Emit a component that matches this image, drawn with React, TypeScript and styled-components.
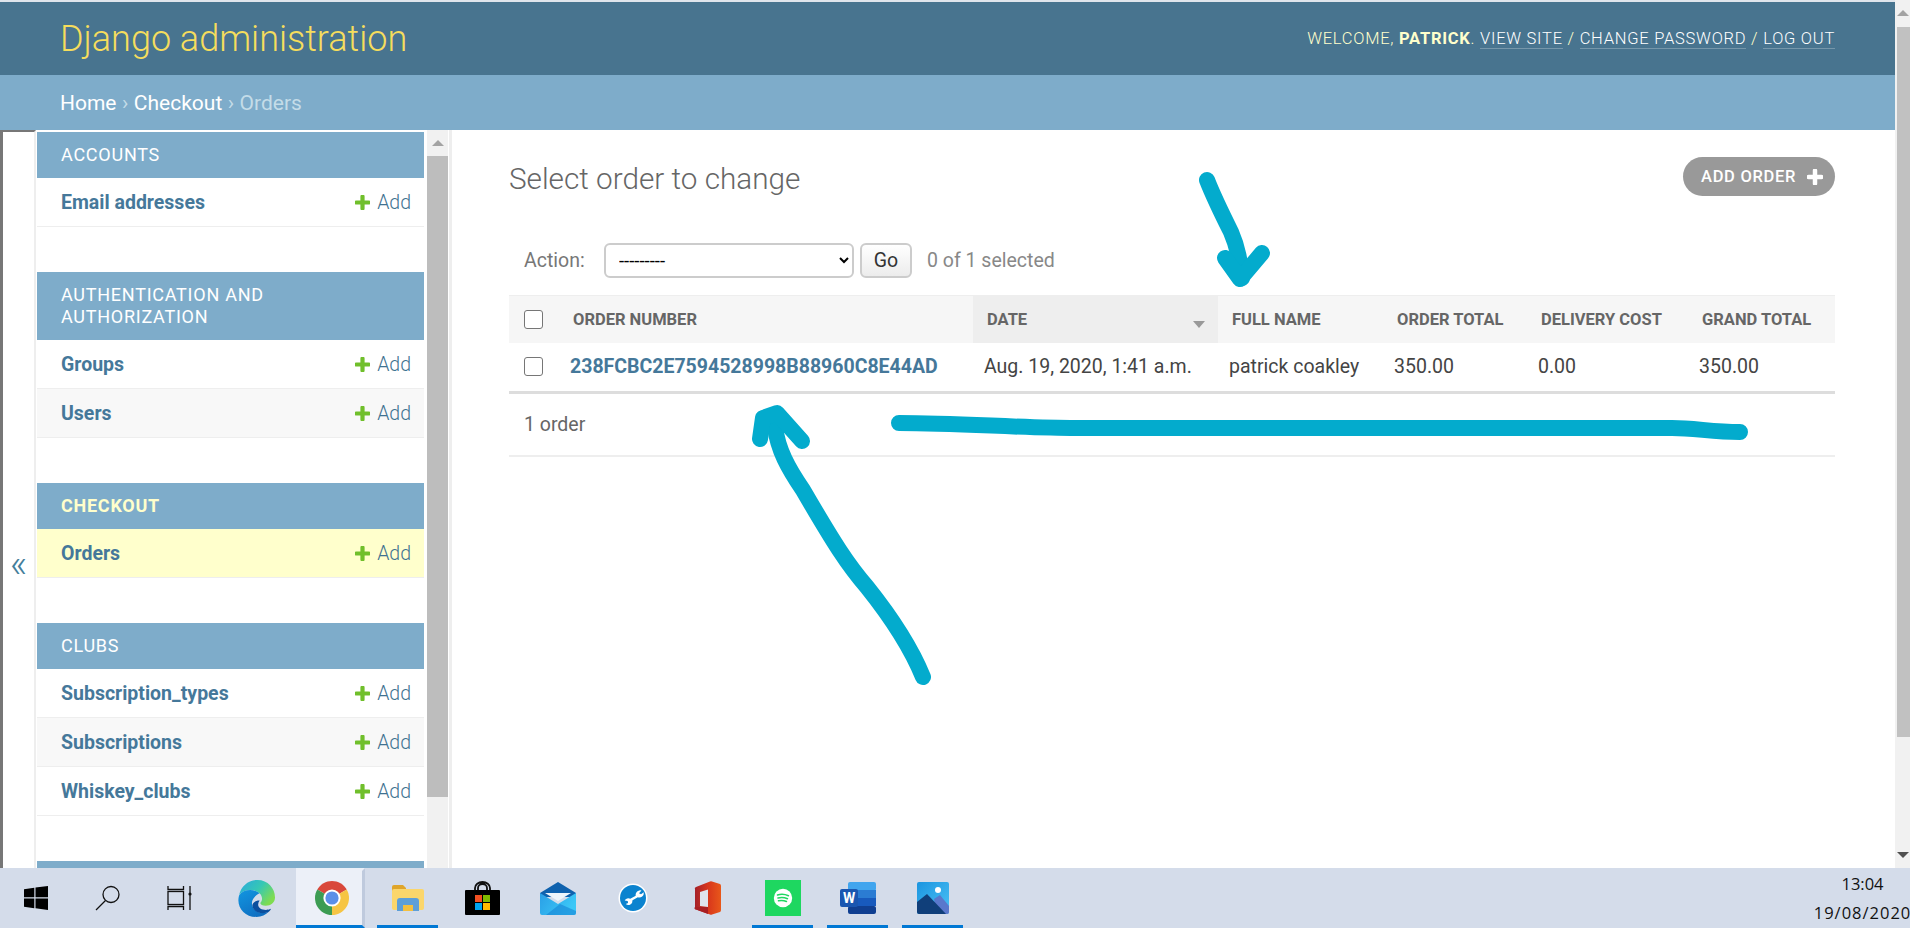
import styled, { createGlobalStyle } from "styled-components";

const GlobalStyle = createGlobalStyle`
  html, body {
    margin: 0;
    padding: 0;
    width: 100%;
    height: 100%;
    overflow: hidden;
    background: #fff;
    font-family: Roboto, "Liberation Sans", sans-serif;
  }
  * { box-sizing: border-box; }
`;

const modules = [
  { name: "ACCOUNTS", rows: ["Email addresses"] },
  { name: "AUTHENTICATION AND\nAUTHORIZATION", rows: ["Groups", "Users"] },
  { name: "CHECKOUT", rows: ["Orders"], current: true },
  { name: "CLUBS", rows: ["Subscription_types", "Subscriptions", "Whiskey_clubs"] },
  { name: "\u00a0", rows: [] },
];

const columns = [
  { label: "ORDER NUMBER", width: 414 },
  { label: "DATE", width: 245, sorted: true },
  { label: "FULL NAME", width: 165 },
  { label: "ORDER TOTAL", width: 144 },
  { label: "DELIVERY COST", width: 161 },
  { label: "GRAND TOTAL", width: 147 },
];

const PlusIcon = ({ size, color }: { size: number; color: string }) => (
  <svg width={size} height={size} viewBox="0 0 15 15">
    <path d="M7.5 1.5v12M1.5 7.5h12" stroke={color} strokeWidth="4.2" strokeLinecap="round" />
  </svg>
);

const WindowsIcon = () => (
  <svg width="24" height="24" viewBox="0 0 24 24">
    <path d="M0 3.3 10.3 1.8v9.5H0zM11.5 1.6 24 0v11.3H11.5zM0 12.6h10.3v9.6L0 20.7zM11.5 12.6H24V24l-12.5-1.7z" fill="#000" />
  </svg>
);

const SearchIcon = () => (
  <svg width="26" height="26" viewBox="0 0 26 26" fill="none" stroke="#111" strokeWidth="1.3">
    <circle cx="16" cy="9.5" r="8" />
    <path d="M10.5 15.5 1 25" />
  </svg>
);

const TaskViewIcon = () => (
  <svg width="26" height="24" viewBox="0 0 26 24" fill="none" stroke="#111" strokeWidth="1.3">
    <path d="M1 0v3.5h15.5V0M1 24v-3.5h15.5V24M23 0v24" />
    <rect x="1" y="5.5" width="15.5" height="13" />
    <circle cx="23" cy="8" r="1.6" fill="#111" stroke="none" />
  </svg>
);

const EdgeIcon = () => (
  <svg width="37" height="37" viewBox="0 0 36 36">
    <defs>
      <linearGradient id="edgeTop" x1="0" y1="0" x2="1" y2="0.6">
        <stop offset="0" stopColor="#2aa8e0" />
        <stop offset="0.55" stopColor="#36c8b4" />
        <stop offset="1" stopColor="#7fdc50" />
      </linearGradient>
      <linearGradient id="edgeLeft" x1="0" y1="0" x2="0.6" y2="1">
        <stop offset="0" stopColor="#1296e0" />
        <stop offset="1" stopColor="#0f6fc2" />
      </linearGradient>
    </defs>
    <path d="M1 15C3 6 10 0 19 0c10 0 17 8 17 17 0 5-4 8-9 8-4 0-6-2-5-3 2-2 2-6-1-9C16 8 5 9 1 15z" fill="url(#edgeTop)" />
    <path d="M1 15c-3 11 5 21 17 21 5 0 9-2 12-5-6 2-14 1-16-6-2-6 3-10 7-12C15 8 5 9 1 15z" fill="url(#edgeLeft)" />
    <path d="M14 25c1 7 10 9 16 6 1-1 2-2 2-3-4 2-8 1-10 0-3-2-3-5-1-8-4 0-7 2-7 5z" fill="#0b4f9e" />
  </svg>
);

const ChromeIcon = () => (
  <svg width="34" height="34" viewBox="0 0 34 34">
    <path d="M17 17 2.28 8.5A17 17 0 0 1 31.72 8.5z" fill="#d9483b" />
    <path d="M17 17 31.72 8.5A17 17 0 0 1 17 34z" fill="#f6c544" />
    <path d="M17 17V34A17 17 0 0 1 2.28 8.5z" fill="#3c9c53" />
    <circle cx="17" cy="17" r="8.6" fill="#fff" />
    <circle cx="17" cy="17" r="6.6" fill="#5b8fe8" />
  </svg>
);

const ExplorerIcon = () => (
  <svg width="32" height="28" viewBox="0 0 32 28">
    <path d="M0 3a2 2 0 0 1 2-2h9l3 3v3H0z" fill="#dfa52a" />
    <rect y="5" width="32" height="21" rx="2" fill="#fbd66b" />
    <path d="M5 27V17a3 3 0 0 1 3-3h16a3 3 0 0 1 3 3v10h-6v-6H11v6z" fill="#5d9fd8" />
    <rect x="11" y="21" width="10" height="6" fill="#f3bf3f" />
  </svg>
);

const StoreIcon = () => (
  <svg width="35" height="34" viewBox="0 0 35 34">
    <path d="M10 11V7a7.5 6 0 0 1 15 0v4M13 11V7a4.5 4 0 0 1 9 0v4" fill="none" stroke="#111" strokeWidth="1.8" />
    <rect y="9" width="35" height="25" rx="1" fill="#000" />
    <rect x="10" y="14" width="7" height="7" fill="#f25022" />
    <rect x="18" y="14" width="7" height="7" fill="#7fba00" />
    <rect x="10" y="22" width="7" height="7" fill="#00a4ef" />
    <rect x="18" y="22" width="7" height="7" fill="#ffb900" />
  </svg>
);

const MailIcon = () => (
  <svg width="36" height="33" viewBox="0 0 36 33">
    <defs>
      <linearGradient id="mailBody" x1="0" y1="0" x2="1" y2="0.4">
        <stop offset="0" stopColor="#2a9fe6" />
        <stop offset="1" stopColor="#3cc8f7" />
      </linearGradient>
    </defs>
    <path d="M18 0 36 11v4H0v-4z" fill="#0f62ae" />
    <path d="M0 11 18 22 36 11v20a2 2 0 0 1-2 2H2a2 2 0 0 1-2-2z" fill="url(#mailBody)" />
    <path d="M5 11h26l-13 8z" fill="#eef5fb" />
    <path d="M6 33h28a2 2 0 0 0 2-2v-2L20 22z" fill="#1584d6" opacity="0.6" />
  </svg>
);

const WrenchIcon = () => (
  <svg width="30" height="30" viewBox="0 0 30 30">
    <circle cx="15" cy="15" r="14.5" fill="#fff" />
    <circle cx="15" cy="15" r="13" fill="#0b83cf" />
    <path d="M23.5 7.5a4.6 4.6 0 0 0-5.8 5.3l-5.4 3a4 4 0 0 0-5.6 1.7l3 .6.4 2-2.3 1a4.2 4.2 0 0 0 6.7-3.8l5.3-3a4.6 4.6 0 0 0 6-5l-2.8 1.9-2-1z" fill="#fff" />
  </svg>
);

const OfficeIcon = () => (
  <svg width="27" height="34" viewBox="0 0 27 34">
    <defs>
      <linearGradient id="officeTop" x1="0" y1="0" x2="1" y2="0">
        <stop offset="0" stopColor="#a3202a" />
        <stop offset="0.5" stopColor="#d8361c" />
        <stop offset="1" stopColor="#e8581a" />
      </linearGradient>
    </defs>
    <path d="M1 8Q0 7 2 6L16 .5Q17 0 18 .5L26 3Q27 3.500 27 5V29Q27 30.500 26 31L18 33.500Q17 34 16 33.500L2 28.500Q0 28 1 26z" fill="url(#officeTop)" />
    <path d="M6 11 14 8.500V26L6 25z" fill="#dfe4ee" />
    <path d="M1 26 14 26V33L2 28.500Q0 28 1 26z" fill="#a81f24" />
  </svg>
);

const SpotifyIcon = () => (
  <svg width="36" height="36" viewBox="0 0 36 36">
    <rect width="36" height="36" fill="#1ed760" />
    <circle cx="18" cy="18" r="9.200" fill="#fff" />
    <path d="M12.500 15c3.500-1 7.500-.8 11 .8M13 18c3-.8 6.500-.6 9.500.8M13.500 20.800c2.500-.6 5.500-.4 8 .7" fill="none" stroke="#1ed760" strokeWidth="1.500" strokeLinecap="round" />
  </svg>
);

const WordIcon = () => (
  <svg width="36" height="32" viewBox="0 0 36 32">
    <rect x="8" width="28" height="9" rx="2" fill="#41a5ee" />
    <rect x="8" y="8" width="28" height="8" fill="#2b7cd3" />
    <rect x="8" y="16" width="28" height="8" fill="#185abd" />
    <rect x="8" y="24" width="28" height="8" rx="2" fill="#103f91" />
    <rect y="7" width="18" height="18" rx="2" fill="#1a56b0" />
    <text x="9" y="21" textAnchor="middle" fill="#fff" fontFamily="Roboto, sans-serif" fontWeight="700" fontSize="14">W</text>
  </svg>
);

const PhotosIcon = () => (
  <svg width="32" height="32" viewBox="0 0 32 32">
    <defs>
      <linearGradient id="photoSky" x1="0" y1="0" x2="1" y2="1">
        <stop offset="0" stopColor="#1b95e0" />
        <stop offset="1" stopColor="#4cc2f5" />
      </linearGradient>
    </defs>
    <rect width="32" height="32" rx="2" fill="url(#photoSky)" />
    <circle cx="21" cy="8" r="3" fill="#fff" />
    <path d="M17 17l6-4 9 11v6a2 2 0 0 1-2 2H20z" fill="#5a78cc" />
    <path d="M0 20l10-8 19 20H2a2 2 0 0 1-2-2z" fill="#103f7a" />
  </svg>
);

const App = () => {
  return (
    <Desktop>
      <GlobalStyle />
      <Screen>
        <Browser>
          <Header>
            <Branding>Django administration</Branding>
            <UserTools>
              WELCOME, <strong>PATRICK</strong>. <UserLink>VIEW SITE</UserLink> /{" "}
              <UserLink>CHANGE PASSWORD</UserLink> / <UserLink>LOG OUT</UserLink>
            </UserTools>
          </Header>
          <Breadcrumbs>
            <Crumb>Home</Crumb> <CrumbSep>›</CrumbSep> <Crumb>Checkout</Crumb> <CrumbSep>›</CrumbSep> Orders
          </Breadcrumbs>
          <Main>
            <NavToggle>«</NavToggle>
            <Sidebar>
              <ModuleList>
                {modules.map((mod) => (
                  <Module key={mod.name}>
                    <Caption $current={mod.current}>{mod.name}</Caption>
                    {mod.rows.map((row, i) => (
                      <ModelRow key={row} $current={mod.current} $alt={i % 2 === 1}>
                        <ModelName>{row}</ModelName>
                        <AddLink>
                          <PlusIcon size={15} color="#70bf2b" />
                          Add
                        </AddLink>
                      </ModelRow>
                    ))}
                  </Module>
                ))}
              </ModuleList>
              <SideScroll>
                <ScrollButton>
                  <ArrowUp $color="#a3a3a3" />
                </ScrollButton>
                <SideThumb />
              </SideScroll>
            </Sidebar>
            <Content>
              <TitleRow>
                <Title>Select order to change</Title>
                <AddButton>
                  ADD ORDER
                  <PlusIcon size={16} color="#fff" />
                </AddButton>
              </TitleRow>
              <Actions>
                <ActionLabel>Action:</ActionLabel>
                <ActionSelect defaultValue="">
                  <option value="">---------</option>
                </ActionSelect>
                <GoButton>Go</GoButton>
                <Counter>0 of 1 selected</Counter>
              </Actions>
              <ResultTable>
                <thead>
                  <tr>
                    <CheckHead>
                      <Check type="checkbox" />
                    </CheckHead>
                    {columns.map((col) => (
                      <HeadCell key={col.label} $width={col.width} $sorted={col.sorted}>
                        {col.label}
                        {col.sorted && <SortMark />}
                      </HeadCell>
                    ))}
                  </tr>
                </thead>
                <tbody>
                  <tr>
                    <CheckCell>
                      <Check type="checkbox" />
                    </CheckCell>
                    <Cell>
                      <OrderLink>238FCBC2E7594528998B88960C8E44AD</OrderLink>
                    </Cell>
                    <Cell>Aug. 19, 2020, 1:41 a.m.</Cell>
                    <Cell>patrick coakley</Cell>
                    <Cell>350.00</Cell>
                    <Cell>0.00</Cell>
                    <Cell>350.00</Cell>
                  </tr>
                </tbody>
              </ResultTable>
              <Paginator>1 order</Paginator>
            </Content>
          </Main>
          <Scribbles viewBox="0 0 1910 868" fill="none" stroke="#03abcd" strokeWidth="16" strokeLinecap="round" strokeLinejoin="round">
            <path d="M1207 180C1214 198 1222 214 1231 232C1238 248 1240 262 1242 278" />
            <path d="M1225 258L1240 279L1262 253" />
            <path d="M923 677C912 650 895 622 867 587C848 565 835 545 803 490C788 468 778 450 775 427" />
            <path d="M760 439L763 418M763 418L777 413L802 441" />
            <path d="M899 423C960 423 1020 428 1076 428L1672 428C1695 428 1712 432 1740 432" />
          </Scribbles>
        </Browser>
        <PageScroll>
          <ScrollButton>
            <ArrowUp $color="#a3a3a3" />
          </ScrollButton>
          <PageThumb />
          <PageScrollEnd>
            <ArrowDown />
          </PageScrollEnd>
        </PageScroll>
      </Screen>
      <Taskbar>
        <ShellIcon><WindowsIcon /></ShellIcon>
        <ShellIcon><SearchIcon /></ShellIcon>
        <ShellIcon><TaskViewIcon /></ShellIcon>
        <Pinned>
          <Tile $width={61}><EdgeIcon /></Tile>
          <ActiveTile><ChromeIcon /></ActiveTile>
          <Tile $width={61} $running><ExplorerIcon /></Tile>
          <Tile $width={61}><StoreIcon /></Tile>
          <Tile $width={61}><MailIcon /></Tile>
          <Tile $width={61}><WrenchIcon /></Tile>
          <Tile $width={61}><OfficeIcon /></Tile>
          <Tile $width={61} $running><SpotifyIcon /></Tile>
          <Tile $width={61} $running><WordIcon /></Tile>
          <Tile $width={61} $running><PhotosIcon /></Tile>
        </Pinned>
        <Clock>
          <span>13:04</span>
          <ClockDate>19/08/2020</ClockDate>
        </Clock>
      </Taskbar>
    </Desktop>
  );
};

export default App;

const Desktop = styled.div`
  width: 1910px;
  height: 928px;
  display: flex;
  flex-direction: column;
  overflow: hidden;
`;

const Screen = styled.div`
  height: 868px;
  display: flex;
`;

const Browser = styled.div`
  position: relative;
  width: 1895px;
  display: flex;
  flex-direction: column;
  border-top: 2px solid #dfe5ec;
`;

const Header = styled.header`
  height: 73px;
  flex: none;
  display: flex;
  align-items: center;
  justify-content: space-between;
  padding: 0 60px;
  background: #48748f;
`;

const Branding = styled.h1`
  margin: 0;
  font-size: 36px;
  font-weight: 300;
  color: #f5dd5d;
`;

const UserTools = styled.div`
  font-size: 16.5px;
  font-weight: 300;
  letter-spacing: 0.75px;
  color: #ffc;

  strong {
    font-weight: 700;
  }
`;

const UserLink = styled.span`
  color: #fff;
  border-bottom: 1px solid rgba(255, 255, 255, 0.25);
`;

const Breadcrumbs = styled.nav`
  height: 55px;
  flex: none;
  display: flex;
  align-items: center;
  gap: 5.5px;
  padding-left: 60px;
  font-size: 21px;
  font-weight: 400;
  color: #c4dce8;
  background: #7eacca;
`;

const Crumb = styled.span`
  color: #fff;
`;

const CrumbSep = styled.span`
  color: #c4dce8;
`;

const Main = styled.div`
  flex: 1;
  min-height: 0;
  display: flex;
  overflow: hidden;
`;

const NavToggle = styled.div`
  width: 36px;
  flex: none;
  display: flex;
  align-items: center;
  justify-content: center;
  padding-top: 128px;
  border-top: 2px solid #777;
  border-left: 3px solid #777;
  border-right: 2px solid #eee;
  font-size: 38px;
  font-weight: 300;
  color: #447e9b;
`;

const Sidebar = styled.aside`
  width: 415px;
  flex: none;
  display: flex;
  margin-left: 1px;
  padding-top: 2px;
  border-right: 3px solid #eee;
`;

const ModuleList = styled.div`
  width: 387px;
  flex: none;
`;

const Module = styled.section`
  margin-bottom: 45px;
`;

const Caption = styled.h2<{ $current?: boolean }>`
  margin: 0;
  padding: 12px 24px;
  white-space: pre-line;
  font-size: 18px;
  line-height: 22px;
  letter-spacing: 0.75px;
  font-weight: ${(p) => (p.$current ? 700 : 400)};
  color: ${(p) => (p.$current ? "#ffc" : "#fff")};
  background: #7eacca;
`;

const ModelRow = styled.div<{ $current?: boolean; $alt?: boolean }>`
  height: 49px;
  display: flex;
  align-items: center;
  justify-content: space-between;
  padding: 0 13px 0 24px;
  border-bottom: 1px solid #eee;
  background: ${(p) => (p.$current ? "#ffc" : p.$alt ? "#f8f8f8" : "#fff")};
`;

const ModelName = styled.span`
  font-size: 19.5px;
  font-weight: 700;
  color: #45789a;
`;

const AddLink = styled.span`
  display: flex;
  align-items: center;
  gap: 7px;
  font-size: 19.5px;
  font-weight: 300;
  color: #3f7291;
`;

const SideScroll = styled.div`
  width: 21px;
  flex: none;
  margin-left: 3px;
  margin-top: -2px;
  background: #f1f1f1;
`;

const ScrollButton = styled.div`
  height: 26px;
  display: flex;
  align-items: center;
  justify-content: center;
`;

const ArrowUp = styled.span<{ $color: string }>`
  width: 0;
  height: 0;
  border-left: 6px solid transparent;
  border-right: 6px solid transparent;
  border-bottom: 6px solid ${(p) => p.$color};
`;

const ArrowDown = styled.span`
  width: 0;
  height: 0;
  border-left: 6px solid transparent;
  border-right: 6px solid transparent;
  border-top: 6px solid #505050;
`;

const SideThumb = styled.div`
  height: 641px;
  background: #bdbdbd;
`;

const Content = styled.main`
  flex: 1;
  min-width: 0;
  padding: 27px 60px 0 57px;
`;

const TitleRow = styled.div`
  height: 39px;
  display: flex;
  align-items: center;
  justify-content: space-between;
`;

const Title = styled.h1`
  margin: 3px 0 0;
  font-size: 29.7px;
  font-weight: 300;
  color: #666;
`;

const AddButton = styled.a`
  width: 152px;
  height: 39px;
  display: flex;
  align-items: center;
  gap: 11px;
  padding-left: 18px;
  border-radius: 20px;
  background: #999;
  color: #fff;
  font-size: 16.5px;
  font-weight: 500;
  letter-spacing: 0.7px;
`;

const Actions = styled.div`
  height: 35px;
  margin-top: 47px;
  display: flex;
  align-items: center;
  padding-left: 15px;
`;

const ActionLabel = styled.label`
  width: 80px;
  font-size: 19.5px;
  font-weight: 400;
  color: #777;
`;

const ActionSelect = styled.select`
  width: 250px;
  height: 35px;
  padding: 0 9px;
  border: 2px solid #ccc;
  border-radius: 6px;
  background: #fff;
  font-family: Roboto, sans-serif;
  font-size: 18.5px;
  color: #000;
`;

const GoButton = styled.button`
  width: 52px;
  height: 35px;
  margin-left: 6px;
  padding: 0;
  border: 2px solid #ccc;
  border-radius: 6px;
  background: linear-gradient(#fff, #ececec);
  font-family: Roboto, sans-serif;
  font-size: 19.5px;
  font-weight: 400;
  color: #333;
`;

const Counter = styled.span`
  margin-left: 15px;
  font-size: 19.5px;
  font-weight: 400;
  color: #888;
`;

const ResultTable = styled.table`
  width: 100%;
  margin-top: 17px;
  table-layout: fixed;
  border-collapse: collapse;
  border-top: 1px solid #eee;
  border-bottom: 3px solid #ddd;
`;

const CheckHead = styled.th`
  width: 50px;
  height: 47px;
  padding: 0 0 0 15px;
  text-align: left;
  background: #f6f6f6;
`;

const HeadCell = styled.th<{ $width: number; $sorted?: boolean }>`
  position: relative;
  width: ${(p) => p.$width}px;
  padding: 0 0 0 14px;
  text-align: left;
  font-size: 16.5px;
  font-weight: 700;
  color: #666;
  background: ${(p) => (p.$sorted ? "#eee" : "#f6f6f6")};
`;

const SortMark = styled.span`
  position: absolute;
  right: 13px;
  top: 25px;
  width: 0;
  height: 0;
  border-left: 6px solid transparent;
  border-right: 6px solid transparent;
  border-top: 7px solid #999;
`;

const Check = styled.input`
  appearance: none;
  display: block;
  width: 19px;
  height: 19px;
  margin: 0;
  border: 1px solid #767676;
  border-radius: 3px;
  background: #fff;
`;

const CheckCell = styled.td`
  height: 50px;
  padding: 0 0 0 15px;
`;

const Cell = styled.td`
  padding: 0 0 0 11px;
  white-space: nowrap;
  font-size: 19.5px;
  font-weight: 400;
  color: #444;
`;

const OrderLink = styled.a`
  font-weight: 700;
  color: #45789a;
`;

const Paginator = styled.div`
  height: 63px;
  display: flex;
  align-items: center;
  padding-left: 15px;
  border-bottom: 2px solid #eee;
  font-size: 19.5px;
  font-weight: 400;
  color: #666;
`;

const Scribbles = styled.svg`
  position: absolute;
  left: 0;
  top: -2px;
  width: 1910px;
  height: 868px;
  pointer-events: none;
`;

const PageScroll = styled.div`
  flex: 1;
  display: flex;
  flex-direction: column;
  background: #f1f1f1;
`;

const PageThumb = styled.div`
  height: 710px;
  margin-top: 1px;
  margin-left: 2px;
  background: #c1c1c1;
`;

const PageScrollEnd = styled.div`
  flex: 1;
  display: flex;
  align-items: flex-end;
  justify-content: center;
  padding-bottom: 10px;
`;

const Taskbar = styled.footer`
  height: 60px;
  flex: none;
  display: flex;
  background: #d4dcea;
`;

const ShellIcon = styled.div`
  width: 72px;
  flex: none;
  display: flex;
  align-items: center;
  justify-content: center;
`;

const Pinned = styled.div`
  display: flex;
  gap: 14px;
  margin-left: 10px;
`;

const Tile = styled.div<{ $width: number; $running?: boolean }>`
  width: ${(p) => p.$width}px;
  display: flex;
  align-items: center;
  justify-content: center;
  border-top: 3px solid transparent;
  border-bottom: 3px solid ${(p) => (p.$running ? "#0078d4" : "transparent")};
`;

const ActiveTile = styled.div`
  width: 69px;
  margin-left: -5px;
  margin-right: -2px;
  display: flex;
  align-items: center;
  justify-content: center;
  padding-left: 6px;
  background: #ecf0f8;
  border-top: 3px solid transparent;
  border-bottom: 3px solid #0078d4;
  border-right: 3px solid #bfcadd;
`;

const Clock = styled.div`
  width: 95px;
  margin-left: auto;
  display: flex;
  flex-direction: column;
  align-items: center;
  justify-content: center;
  gap: 7px;
  font-family: "Open Sans", sans-serif;
  font-size: 16.5px;
  line-height: 22px;
  color: #111;
`;

const ClockDate = styled.span`
  letter-spacing: 1px;
`;
